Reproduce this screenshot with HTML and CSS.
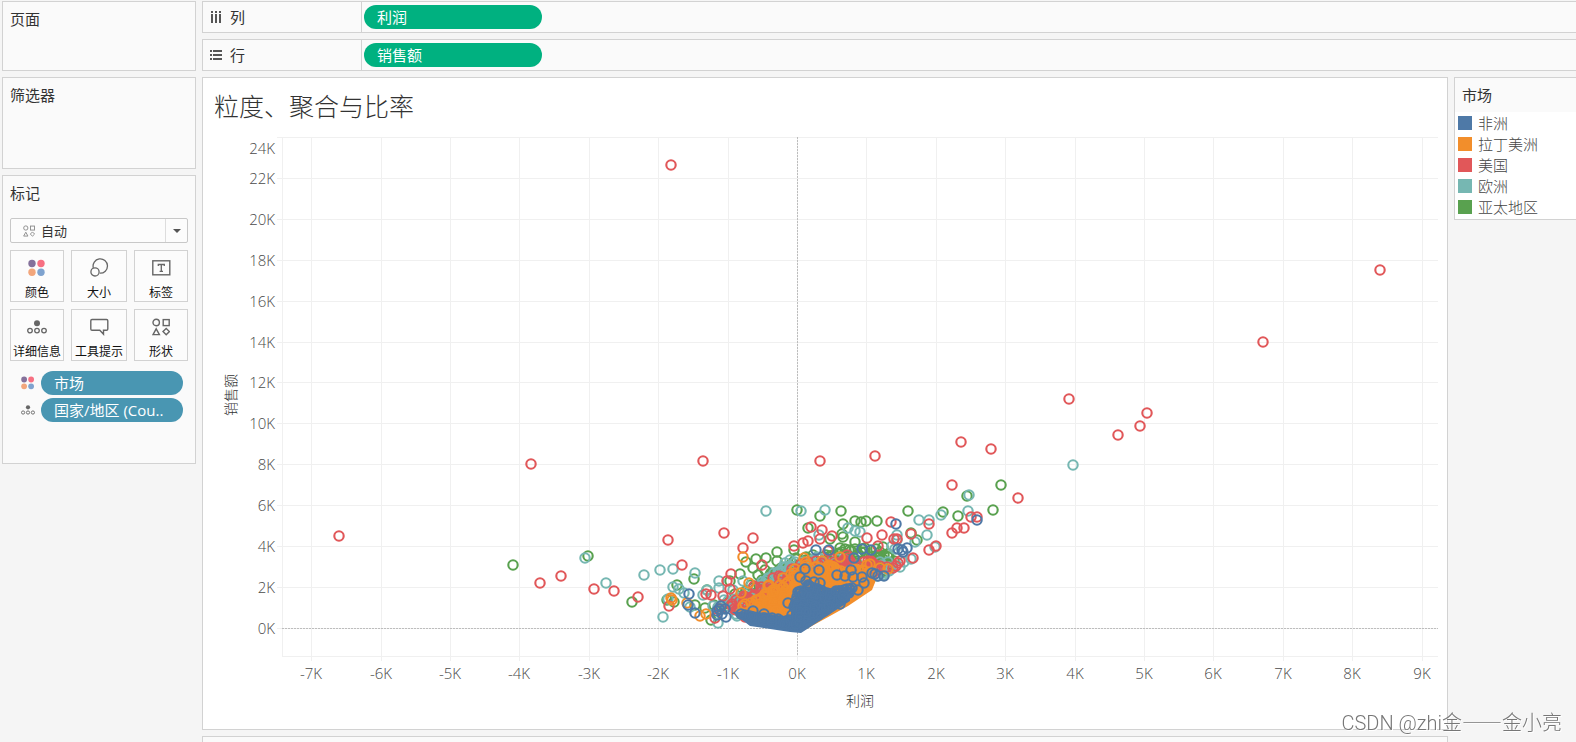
FILE: index.html
```html
<!DOCTYPE html>
<html lang="zh-CN">
<head>
<meta charset="utf-8">
<meta name="viewport" content="width=device-width, initial-scale=1">
<title>粒度、聚合与比率</title>
<link rel="stylesheet" href="styles.css">
</head>
<body>
<svg class="symbols" aria-hidden="true">
  <symbol id="i-color" viewBox="0 0 18 18">
    <circle cx="4" cy="4.5" r="3.7" fill="#85719b"/><circle cx="13" cy="4.5" r="3.7" fill="#f77082"/>
    <circle cx="4" cy="13.3" r="3.7" fill="#f2a67c"/><circle cx="13" cy="13.3" r="3.7" fill="#7fa3cf"/>
  </symbol>
  <symbol id="i-detail" viewBox="0 0 20 14">
    <circle cx="10" cy="3.2" r="3" fill="#666"/>
    <g fill="none" stroke="#666" stroke-width="1.3"><circle cx="3" cy="10.6" r="2.3"/><circle cx="10" cy="10.6" r="2.3"/><circle cx="17" cy="10.6" r="2.3"/></g>
  </symbol>
  <symbol id="i-shape" viewBox="0 0 18 18">
    <g fill="none" stroke="#666" stroke-width="1.4"><circle cx="4.2" cy="4.5" r="3.2"/><rect x="11.2" y="1.6" width="6" height="6"/><path d="M4.2 10.8 7.4 16.6H1Z"/><path d="M14.2 10.4 17.4 13.6 14.2 16.8 11 13.6Z"/></g>
  </symbol>
</svg>
<div class="app">
  <aside class="side">
    <section class="card card-pages"><h2 class="card-title">页面</h2></section>
    <section class="card card-filters"><h2 class="card-title">筛选器</h2></section>
    <section class="card card-marks">
      <h2 class="card-title">标记</h2>
      <div class="mark-type">
        <svg class="mark-type-icon" viewBox="0 0 18 18"><use href="#i-shape"/></svg>
        <select class="mark-type-select" aria-label="标记类型"><option>自动</option></select>
        <span class="mark-type-arrow"></span>
      </div>
      <div class="mark-grid">
        <button class="mark-btn" type="button"><svg class="icon" viewBox="0 0 20 20"><use href="#i-color" x="1" y="1" width="18" height="18"/></svg>颜色</button>
        <button class="mark-btn" type="button"><svg class="icon" viewBox="0 0 20 20"><g fill="none" stroke="#666" stroke-width="1.3"><path d="M4.3 9.8A7.200 7.200 0 1 1 10.800 15.200"/><circle cx="6" cy="13.9" r="4.1"/></g></svg>大小</button>
        <button class="mark-btn" type="button"><svg class="icon" viewBox="0 0 20 20"><g fill="none" stroke="#666"><rect x="1.8" y="2.8" width="17" height="14" stroke-width="1.4"/><path d="M7.3 8V6.5H13.3V8M10.3 6.5V13.4M8.6 13.4H12" stroke-width="1.3"/></g></svg>标签</button>
        <button class="mark-btn" type="button"><svg class="icon" viewBox="0 0 20 20"><use href="#i-detail" x="0" y="3" width="20" height="14"/></svg>详细信息</button>
        <button class="mark-btn" type="button"><svg class="icon" viewBox="0 0 20 20"><path d="M3 2.5H17.500Q18.800 2.500 18.800 3.800V12Q18.800 13.300 17.500 13.300H14.500V17.200L10.800 13.300H3Q1.800 13.300 1.800 12V3.800Q1.800 2.500 3 2.500Z" fill="none" stroke="#666" stroke-width="1.4"/></svg>工具提示</button>
        <button class="mark-btn" type="button"><svg class="icon" viewBox="0 0 20 20"><use href="#i-shape" x="1" y="1" width="18" height="18"/></svg>形状</button>
      </div>
      <div class="mark-pills">
        <div class="mark-row"><svg class="row-icon" viewBox="0 0 18 18"><use href="#i-color"/></svg><button type="button" class="pill pill-dim">市场</button></div>
        <div class="mark-row"><svg class="row-icon" viewBox="0 0 20 14"><use href="#i-detail"/></svg><button type="button" class="pill pill-dim">国家/地区 (Cou..</button></div>
      </div>
    </section>
  </aside>
  <main class="main">
    <section class="shelf">
      <h2 class="shelf-label"><svg class="shelf-icon" viewBox="0 0 12 12" fill="#555"><path d="M1 0h2v2H1zM5 0h2v2H5zM9 0h2v2H9zM1 3h2v9H1zM5 3h2v9H5zM9 3h2v9H9z"/></svg>列</h2>
      <button type="button" class="pill pill-measure">利润</button>
    </section>
    <section class="shelf">
      <h2 class="shelf-label"><svg class="shelf-icon" viewBox="0 0 12 12" fill="#555"><path d="M0 1h2v2H0zM0 5h2v2H0zM0 9h2v2H0zM3 1h9v2H3zM3 5h9v2H3zM3 9h9v2H3z"/></svg>行</h2>
      <button type="button" class="pill pill-measure">销售额</button>
    </section>
    <div class="workspace">
      <section class="sheet">
        <h1 class="sheet-title">粒度、聚合与比率</h1>
        <svg class="chart" id="chart" viewBox="203 129 1244 600" role="img" aria-label="利润与销售额散点图"></svg>
      </section>
      <section class="legend">
        <h2 class="legend-title">市场</h2>
        <ul class="legend-list">
          <li class="legend-item"><span class="swatch africa"></span>非洲</li>
          <li class="legend-item"><span class="swatch latam"></span>拉丁美洲</li>
          <li class="legend-item"><span class="swatch usa"></span>美国</li>
          <li class="legend-item"><span class="swatch europe"></span>欧洲</li>
          <li class="legend-item"><span class="swatch apac"></span>亚太地区</li>
        </ul>
      </section>
      <section class="lower"></section>
    </div>
  </main>
</div>
<div class="watermark">CSDN @zhi<span class="watermark-cjk">金——金小亮</span></div>
<script src="chart.js"></script>
</body>
</html>
```
FILE: styles.css
```css
* { box-sizing: border-box; }
body {
  margin: 0;
  height: 100vh;
  overflow: hidden;
  background: #f5f5f5;
  color: #333;
  font-family: "Open Sans", "Noto Sans CJK SC", sans-serif;
  font-size: 15px;
  line-height: 20px;
}
h1, h2, ul { margin: 0; padding: 0; font-weight: 400; }
button, select { font: inherit; color: inherit; margin: 0; }
.symbols { display: none; }
.app {
  display: grid;
  grid-template-columns: 194px minmax(0, 1fr);
  gap: 6px;
  padding: 1px 0 0 2px;
}
.side, .main { display: flex; flex-direction: column; gap: 6px; }
.card { background: #fafafa; border: 1px solid #d2d2d2; padding: 7px; }
.card-title { font-size: 15px; line-height: 20px; }
.card-pages { min-height: 70px; }
.card-filters { min-height: 92px; }
.card-marks { padding-bottom: 41px; }
.mark-type {
  display: flex;
  align-items: center;
  height: 25px;
  margin-top: 15px;
  border: 1px solid #c8c8c8;
  border-radius: 2px;
  background: #fcfcfc;
}
.mark-type-icon { width: 12px; height: 12px; margin-left: 12px; opacity: .75; }
.mark-type-select {
  flex: 1;
  min-width: 0;
  height: 23px;
  padding: 0 0 0 6px;
  border: 0;
  appearance: none;
  background: transparent;
  font-size: 13px;
}
.mark-type-arrow {
  display: flex;
  align-items: center;
  justify-content: center;
  width: 22px;
  height: 23px;
  border-left: 1px solid #ddd;
}
.mark-type-arrow::before {
  content: "";
  border: 4px solid transparent;
  border-top-color: #555;
  border-bottom: 0;
}
.mark-grid {
  display: grid;
  grid-template-columns: 54px 1fr 54px;
  gap: 7px;
  margin-top: 7px;
}
.mark-btn {
  display: flex;
  flex-direction: column;
  align-items: center;
  height: 52px;
  padding: 7px 0 0;
  border: 1px solid #d2d2d2;
  background: #fcfcfc;
  color: #111;
  font-size: 12px;
  line-height: 18px;
  white-space: nowrap;
}
.icon { width: 20px; height: 20px; margin-bottom: 6px; flex: none; }
.mark-pills { display: flex; flex-direction: column; gap: 3px; margin-top: 10px; }
.mark-row { display: flex; align-items: center; gap: 6px; padding: 0 5px 0 11px; }
.row-icon { width: 14px; height: 14px; flex: none; }
.pill {
  height: 24px;
  padding: 0 13px;
  border: 0;
  border-radius: 12px;
  color: #fff;
  font-size: 15px;
  line-height: 24px;
  text-align: left;
  white-space: nowrap;
}
.pill-dim { flex: 1; background: #4996b2; }
.pill-measure { width: 178px; background: #00b180; }
.shelf {
  display: flex;
  align-items: center;
  height: 32px;
  background: #fafafa;
  border: 1px solid #d2d2d2;
  border-right: 0;
}
.shelf-label {
  display: flex;
  align-items: center;
  gap: 8px;
  width: 159px;
  height: 30px;
  margin-right: 2px;
  padding-left: 7px;
  border-right: 1px solid #d2d2d2;
  font-size: 15px;
}
.shelf-icon { width: 12px; height: 12px; }
.workspace {
  display: grid;
  grid-template-columns: minmax(0, 1fr) 122px;
  gap: 6px;
  align-items: start;
}
.sheet { background: #fff; border: 1px solid #d2d2d2; }
.sheet-title {
  padding: 12px 11px 7px;
  font-size: 25px;
  line-height: 32px;
  font-weight: 300;
}
.chart { display: block; width: 100%; height: auto; }
.grid { stroke: #f0f0f0; fill: none; shape-rendering: crispEdges; }
.zero { stroke: #bdbdbd; stroke-dasharray: 2 1; shape-rendering: crispEdges; }
.tick { fill: #4a4a4a; font-size: 15px; font-weight: 300; }
.axis-title { fill: #333; font-size: 14px; font-weight: 300; text-anchor: middle; }
.ring { fill: none; stroke-width: 2.1; }
.legend {
  padding-bottom: 2px;
  background: #fff;
  border: 1px solid #d2d2d2;
  border-right: 0;
}
.legend-title { padding: 7px; background: #fafafa; font-size: 15px; line-height: 20px; }
.legend-list { list-style: none; }
.legend-item {
  display: flex;
  align-items: center;
  gap: 6px;
  height: 21px;
  padding-left: 3px;
  color: #444;
  font-size: 15px;
  font-weight: 300;
}
.swatch { width: 14px; height: 14px; }
.africa { background: #4e79a7; }
.latam { background: #f28e2b; }
.usa { background: #e15759; }
.europe { background: #76b7b2; }
.apac { background: #59a14f; }
.lower { height: 40px; border: 1px solid #d2d2d2; background: #fafafa; }
.watermark {
  position: fixed;
  right: 14px;
  bottom: 6px;
  color: #777;
  font-family: Roboto, sans-serif;
  font-size: 20px;
  font-weight: 300;
  line-height: 26px;
  text-shadow: 1px 1px 0 #fff;
}
.watermark-cjk { font-family: "Noto Sans CJK SC", sans-serif; }
```
FILE: chart.js
```js
const NS = "http://www.w3.org/2000/svg";
const chart = document.getElementById("chart");
const X0 = 797, Y0 = 628, KX = 69.4, KY = 20.46;
const LEFT = 282, RIGHT = 1438, TOP = 137, BOTTOM = 656;

function add(name, attrs, text) {
  const el = document.createElementNS(NS, name);
  for (const key in attrs) el.setAttribute(key, attrs[key]);
  if (text) el.textContent = text;
  chart.appendChild(el);
}

/* Grid, ticks and axis labels */
let grid = `M277 ${TOP}.5H${RIGHT}M${LEFT}.5 ${TOP}V${BOTTOM}M${LEFT} ${BOTTOM}.5H${RIGHT}`;
for (let k = -7; k <= 9; k++) {
  const x = Math.round(X0 + k * KX);
  grid += `M${x}.5 ${TOP}V661`;
  add("text", { class: "tick", x, y: 679, "text-anchor": "middle" }, k + "K");
}
for (let k = 0; k <= 24; k += 2) {
  const y = Math.round(Y0 - k * KY);
  if (k < 24) grid += `M277 ${y}.5H${RIGHT}`;
  add("text", { class: "tick", x: 275, y: k < 24 ? y + 6 : 154, "text-anchor": "end" }, k + "K");
}
add("path", { class: "grid", d: grid });
add("path", { class: "zero", d: `M${X0}.5 ${TOP}V${BOTTOM}M${LEFT} ${Y0}.5H${RIGHT}` });
add("text", { class: "axis-title", x: 860, y: 706 }, "利润");
add("text", { class: "axis-title", transform: "translate(236 395) rotate(-90)" }, "销售额");

/* Each market: outlying marks, dense cloud outline, number of cloud marks, solid core */
const markets = [
  { color: "#59a14f",
    points: "1001,485 993,510 513,565 588,556 632,602 958,516 797,510 820,516 808,528 777,552 766,558 756,559 746,562 753,568 777,561 740,574 694,579 677,585 667,600 674,602 695,605 705,608 711,620 765,570 758,575 770,575 730,581 707,590 794,550 762,580 841,511 908,511 943,512 855,521 861,522 866,521 877,521 843,524 842,534 843,537 855,542 911,533 917,540 967,496 830,539 849,550 880,552 884,555 883,547",
    cloud: "712,606 762,578 797,556 850,546 885,550 896,562 870,583 800,627 750,620", count: 300 },
  { color: "#76b7b2",
    points: "1073,465 585,558 606,583 644,575 660,570 673,569 695,573 766,511 801,511 825,510 673,587 679,589 684,593 663,617 718,623 719,581 719,588 707,590 703,595 713,606 668,599 743,581 785,563 783,567 690,607 786,567 919,520 929,520 927,535 969,495 968,511 941,515 848,528 855,531 860,532 897,535 897,540 935,547 911,559 915,542 895,549 900,567 819,535 724,600 733,590 790,560 892,546 904,562",
    cloud: "712,610 765,578 790,560 815,554 850,560 890,562 896,569 870,584 800,627 750,620", count: 190 },
  { color: "#e15759",
    points: "671,165 1380,270 1263,342 1069,399 1147,413 1140,426 1118,435 961,442 991,449 875,456 820,461 703,461 531,464 339,536 952,485 1018,498 561,576 540,583 594,589 614,591 638,597 668,540 724,533 753,538 743,548 682,565 731,574 727,581 730,589 706,594 711,595 723,596 669,606 762,565 754,586 749,599 715,618 720,609 794,546 803,543 808,541 811,527 822,530 820,539 832,536 779,576 773,578 732,604 739,609 891,522 929,524 911,534 882,535 867,538 878,546 897,539 894,539 929,550 936,546 913,558 952,533 957,528 964,528 971,517 977,517 898,563 896,566 893,568 900,561 828,551 847,555",
    cloud: "722,608 745,592 775,580 800,562 850,557 880,562 894,567 870,583 800,627 750,620", count: 230 },
  { color: "#f28e2b",
    points: "743,557 749,583 741,593 672,600 700,616 706,614 768,586 783,578 761,598 687,603 840,557 867,565 888,569 870,564 804,558 822,561 671,598 769,585 806,562 880,568",
    cloud: "734,608 755,600 780,584 798,566 825,562 840,570 866,568 880,571 866,583 800,627 750,620", count: 300,
    core: "734,614 752,604 788,586 797,568 835,570 856,579 876,580 872,590 848,606 801,632 750,624" },
  { color: "#4e79a7",
    points: "689,594 688,605 695,613 719,609 725,609 717,615 726,617 722,614 753,611 764,614 788,603 816,550 829,550 805,569 819,570 800,577 896,524 977,520 862,549 871,550 898,549 902,550 907,548 854,558 851,570 837,575 845,576 853,577 862,577 872,573 878,576 884,576 864,583 858,590 814,582 820,583 840,604 806,581 875,574 903,552 717,611 721,606",
    cloud: "736,613 768,617 790,620 798,592 808,584 826,592 846,588 856,588 846,598 800,626 790,626 760,620", count: 170,
    core: "732,612 752,611 790,618 794,598 806,590 850,592 850,601 801,633 790,632 750,626" }
];

let seed = 7;
function random() {
  seed = (seed * 16807) % 2147483647;
  return seed / 2147483647;
}
function parse(list) {
  return list.split(" ").map(pair => pair.split(",").map(Number));
}
function inside([x, y], poly) {
  let hit = false;
  for (let i = 0, j = poly.length - 1; i < poly.length; j = i++) {
    const [ax, ay] = poly[i], [bx, by] = poly[j];
    if ((ay > y) !== (by > y) && x < (bx - ax) * (y - ay) / (by - ay) + ax) hit = !hit;
  }
  return hit;
}
for (const { color, points, cloud, count, core } of markets) {
  if (core) add("polygon", { points: core, fill: color });
  const marks = parse(points), outline = parse(cloud);
  for (let n = 0; n < count;) {
    const mark = [700 + random() * 220, 540 + random() * 90].map(Math.round);
    if (inside(mark, outline)) { marks.push(mark); n++; }
  }
  for (const [cx, cy] of marks) add("circle", { class: "ring", cx, cy, r: 4.7, stroke: color });
}
```
